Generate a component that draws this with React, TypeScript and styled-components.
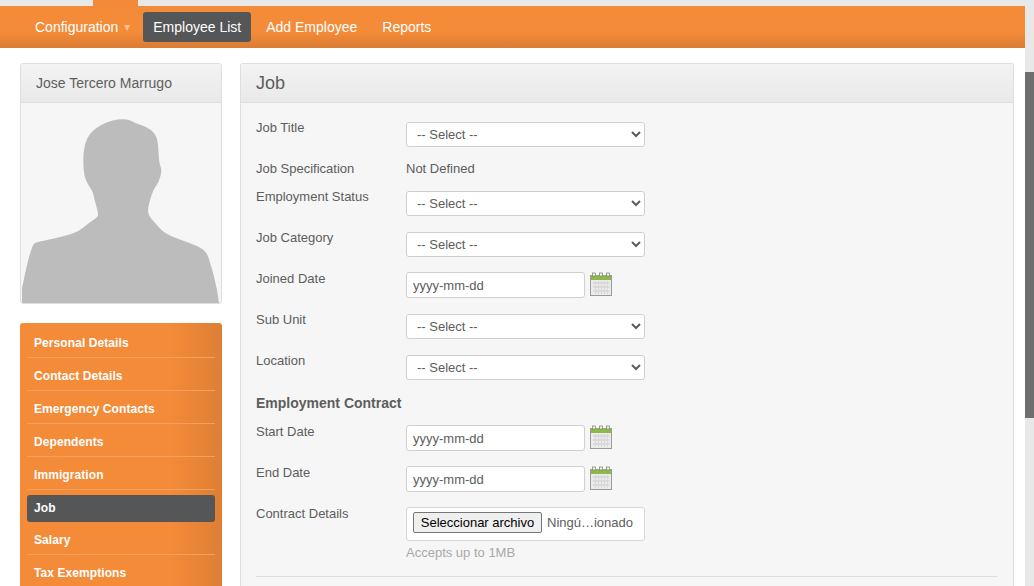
import React from "react";
import styled, { createGlobalStyle } from "styled-components";

const GlobalStyle = createGlobalStyle`
  html, body {
    margin: 0;
    padding: 0;
    height: 100%;
    overflow: hidden;
    background: #fff;
  }
  #root {
    height: 100%;
  }
  * {
    box-sizing: border-box;
  }
`;

const Page = styled.div`
  display: flex;
  width: 1034px;
  height: 586px;
  overflow: hidden;
  font-family: "Liberation Sans", Arial, sans-serif;
  font-size: 13px;
  color: #5d5d5d;
`;

const Content = styled.div`
  width: 1025px;
  flex: none;
  display: flex;
  flex-direction: column;
`;

const TopStrip = styled.div`
  height: 6px;
  flex: none;
  background: #e8e8e8;
  padding-left: 93px;
`;

const TopTab = styled.div`
  width: 45px;
  height: 6px;
  background: #f48a38;
`;

const Nav = styled.nav`
  height: 42px;
  flex: none;
  display: flex;
  align-items: center;
  padding-left: 25px;
  background: linear-gradient(to bottom, #f48b39 0%, #f48b39 62%, #d97c33 100%);
`;

const NavItem = styled.a<{ $active?: boolean }>`
  display: flex;
  align-items: center;
  gap: 6px;
  height: 30px;
  padding: 0 10px;
  margin-right: 5px;
  border-radius: 3px;
  font-size: 14px;
  color: #fff;
  background: ${(p) => (p.$active ? "#555657" : "transparent")};
`;

const Caret = styled.span`
  width: 0;
  height: 0;
  margin: 1px -2px 0 0;
  border-left: 3px solid transparent;
  border-right: 3px solid transparent;
  border-top: 6px solid #f8c193;
`;

const Body = styled.div`
  display: flex;
  gap: 18px;
  padding: 15px 11px 0 20px;
  align-items: flex-start;
`;

const Sidebar = styled.aside`
  width: 202px;
  flex: none;
`;

const ProfileCard = styled.div`
  height: 241px;
  border: 1px solid #dedede;
  border-radius: 3px;
  background: #f6f6f6;
  overflow: hidden;
  margin-bottom: 19px;
  display: flex;
  flex-direction: column;
`;

const CardHead = styled.div`
  height: 39px;
  flex: none;
  display: flex;
  align-items: center;
  padding-left: 15px;
  font-size: 14px;
  color: #5d5d5d;
  background: linear-gradient(to bottom, #f3f3f3, #e9e9e9);
  border-bottom: 1px solid #dedede;
`;

const Silhouette = styled.svg`
  display: block;
  width: 200px;
  height: 201px;
  flex: none;
`;

const Menu = styled.ul`
  list-style: none;
  margin: 0;
  padding: 2px 7px 0;
  border-radius: 3px 3px 0 0;
  background: linear-gradient(to right, #f48b39 0%, #f48b39 74%, #dd7f34 100%);
`;

const MenuItem = styled.li`
  height: 33px;
  display: flex;
  align-items: center;
  padding: 4px 0 0 7px;
  font-size: 12px;
  font-weight: 700;
  letter-spacing: 0.08px;
  line-height: 15px;
  color: #fff;
  border-bottom: 1px solid #f6a05c;
`;

const ActiveMenuItem = styled(MenuItem)`
  height: 27px;
  margin-top: 5px;
  padding-top: 0;
  border-bottom: none;
  border-radius: 3px;
  background: #555657;
`;

const Panel = styled.main`
  width: 774px;
  flex: none;
  height: 540px;
  border: 1px solid #dedede;
  border-bottom: none;
  border-radius: 3px 3px 0 0;
  background: #f6f6f6;
`;

const PanelHead = styled.div`
  height: 39px;
  display: flex;
  align-items: center;
  padding-left: 15px;
  font-size: 18px;
  color: #5d5d5d;
  background: linear-gradient(to bottom, #f3f3f3, #e9e9e9);
  border-bottom: 1px solid #dedede;
`;

const Form = styled.form`
  padding: 19px 15px 0;
`;

const Row = styled.div`
  display: flex;
  align-items: flex-start;
  margin-bottom: 16px;
`;

const TextRow = styled(Row)`
  height: 12px;
  align-items: center;
`;

const DateRow = styled(Row)<{ $tight?: boolean }>`
  margin-top: ${(p) => (p.$tight ? "-1px" : "0")};
  margin-bottom: ${(p) => (p.$tight ? "16px" : "15px")};
`;

const FileRow = styled(Row)`
  margin-bottom: 0;
`;

const Label = styled.label`
  width: 150px;
  flex: none;
  font-size: 13px;
  line-height: 14px;
`;

const TopLabel = styled(Label)`
  margin-top: -1px;
`;

const Value = styled.span`
  font-size: 13px;
  line-height: 14px;
  margin-top: -1px;
`;

const Select = styled.select`
  width: 239px;
  height: 25px;
  padding: 0 6px;
  border: 1px solid #cfcfcf;
  border-radius: 3px;
  background: #fff;
  font: 13px "Liberation Sans", Arial, sans-serif;
  color: #5d5d5d;
`;

const DateInput = styled.input`
  width: 179px;
  height: 26px;
  padding: 0 6px;
  border: 1px solid #cfcfcf;
  border-radius: 3px;
  background: #fff;
  font: 13px "Liberation Sans", Arial, sans-serif;
  color: #5d5d5d;

  &::placeholder {
    color: #5d5d5d;
    opacity: 1;
  }
`;

const CalendarSvg = styled.svg`
  width: 22px;
  height: 24px;
  margin-left: 5px;
  flex: none;
`;

const SectionTitle = styled.h2`
  margin: -1px 0 14px;
  font-size: 14px;
  line-height: 16px;
  font-weight: 700;
  color: #5d5d5d;
`;

const FileBox = styled.div`
  width: 239px;
  height: 34px;
  display: flex;
  align-items: center;
  padding: 0 0 3px 6px;
  gap: 5px;
  border: 1px solid #d8d8d8;
  border-radius: 3px;
  background: #fff;
  font-size: 13px;
`;

const FileButton = styled.button`
  width: 129px;
  height: 21px;
  padding: 0;
  border: 1px solid #767676;
  border-radius: 2px;
  background: #efefef;
  color: #000;
  font: 13px "Liberation Sans", Arial, sans-serif;
`;

const Hint = styled.div`
  margin: 5px 0 0 150px;
  font-size: 13px;
  line-height: 14px;
  color: #a9a9a9;
`;

const Divider = styled.hr`
  margin: 16px 0 0;
  border: none;
  border-top: 1px solid #dedede;
`;

const Scrollbar = styled.div`
  width: 9px;
  flex: none;
  padding-top: 72px;
  background: #e8e8e8;
`;

const Thumb = styled.div`
  height: 346px;
  background: #6e6e6e;
`;

// outline of the placeholder photo, traced from the picture
const outline: [number, number][] = [
  [1, 185], [7, 157], [12, 141], [16, 139], [36, 135], [54, 130], [62, 125],
  [69, 119], [77, 114], [77, 109], [73, 95], [72, 89], [66, 80], [63, 72],
  [62, 54], [64, 40], [69, 30], [79, 22], [92, 17], [102, 16], [109, 17],
  [114, 20], [126, 24], [134, 30], [137, 39], [138, 60], [141, 67], [138, 79],
  [132, 87], [127, 104], [127, 112], [134, 120], [144, 131], [166, 139],
  [181, 145], [187, 152], [189, 160], [192, 169], [196, 187],
];

const silhouettePath = () => {
  let d = "M1 200 L1 185";
  outline.forEach(([x, y], i) => {
    const next = outline[i + 1];
    if (next) d += ` Q${x} ${y} ${(x + next[0]) / 2} ${(y + next[1]) / 2}`;
  });
  return d + " L196 187 L198 200 Z";
};

const Calendar = () => (
  <CalendarSvg viewBox="0 0 22 24">
    <rect x="0.5" y="3.5" width="21" height="20" fill="#ebebeb" stroke="#9a9a9a" />
    <rect x="1" y="3" width="20" height="5" fill="#8db84a" />
    <g fill="#d9d9d9">
      <rect x="3" y="10" width="16" height="2" />
      <rect x="3" y="14" width="16" height="2" />
      <rect x="3" y="18" width="16" height="2" />
      <rect x="5" y="9" width="1" height="13" />
      <rect x="8" y="9" width="1" height="13" />
      <rect x="11" y="9" width="1" height="13" />
      <rect x="14" y="9" width="1" height="13" />
      <rect x="17" y="9" width="1" height="13" />
    </g>
    <g fill="#f2f2f2" stroke="#7d7d7d" strokeWidth="0.7">
      <rect x="2.5" y="1" width="3" height="3" />
      <rect x="9.5" y="1" width="3" height="3" />
      <rect x="16.5" y="1" width="3" height="3" />
    </g>
  </CalendarSvg>
);

const SelectRow = ({ label }: { label: string }) => (
  <Row>
    <TopLabel>{label}</TopLabel>
    <Select defaultValue="">
      <option value="">-- Select --</option>
    </Select>
  </Row>
);

const DateField = ({ label, tight }: { label: string; tight?: boolean }) => (
  <DateRow $tight={tight}>
    <Label>{label}</Label>
    <DateInput placeholder="yyyy-mm-dd" />
    <Calendar />
  </DateRow>
);

const menuItems = [
  "Personal Details",
  "Contact Details",
  "Emergency Contacts",
  "Dependents",
  "Immigration",
  "Job",
  "Salary",
  "Tax Exemptions",
];

export default function App() {
  return (
    <Page>
      <GlobalStyle />
      <Content>
        <TopStrip>
          <TopTab />
        </TopStrip>
        <Nav>
          <NavItem>
            Configuration
            <Caret />
          </NavItem>
          <NavItem $active>Employee List</NavItem>
          <NavItem>Add Employee</NavItem>
          <NavItem>Reports</NavItem>
        </Nav>
        <Body>
          <Sidebar>
            <ProfileCard>
              <CardHead>Jose Tercero Marrugo</CardHead>
              <Silhouette viewBox="0 0 200 201">
                <path fill="#bcbcbc" d={silhouettePath()} />
              </Silhouette>
            </ProfileCard>
            <Menu>
              {menuItems.map((item) =>
                item === "Job" ? (
                  <ActiveMenuItem key={item}>{item}</ActiveMenuItem>
                ) : (
                  <MenuItem key={item}>{item}</MenuItem>
                )
              )}
            </Menu>
          </Sidebar>
          <Panel>
            <PanelHead>Job</PanelHead>
            <Form>
              <SelectRow label="Job Title" />
              <TextRow>
                <Label>Job Specification</Label>
                <Value>Not Defined</Value>
              </TextRow>
              <SelectRow label="Employment Status" />
              <SelectRow label="Job Category" />
              <DateField label="Joined Date" tight />
              <SelectRow label="Sub Unit" />
              <SelectRow label="Location" />
              <SectionTitle>Employment Contract</SectionTitle>
              <DateField label="Start Date" />
              <DateField label="End Date" />
              <FileRow>
                <Label>Contract Details</Label>
                <FileBox>
                  <FileButton type="button">Seleccionar archivo</FileButton>
                  Ningú…ionado
                </FileBox>
              </FileRow>
              <Hint>Accepts up to 1MB</Hint>
              <Divider />
            </Form>
          </Panel>
        </Body>
      </Content>
      <Scrollbar>
        <Thumb />
      </Scrollbar>
    </Page>
  );
}
